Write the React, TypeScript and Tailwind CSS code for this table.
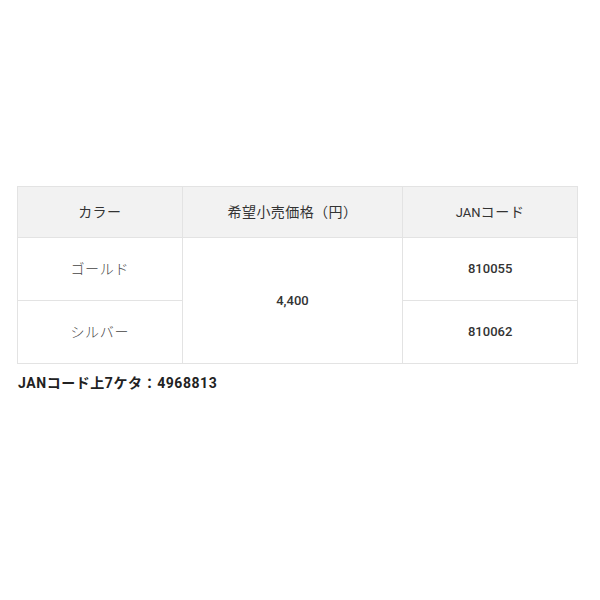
export default function App() {
  return (
    <div
      className="min-h-[600px] w-[600px] bg-white pt-[186px] text-[#333]"
      style={{ fontFamily: "Roboto, 'Noto Sans CJK JP', sans-serif" }}
    >
      <table className="ml-[17px] w-[561px] border-collapse border border-[#e3e3e3] text-[13px]">
        <colgroup>
          <col className="w-[165px]" />
          <col className="w-[221px]" />
          <col className="w-[175px]" />
        </colgroup>
        <thead>
          <tr className="h-[51px] bg-[#f2f2f2]">
            <th className="border border-[#e3e3e3] text-[14px] font-normal tracking-[0.03em]">カラー</th>
            <th className="border border-[#e3e3e3] text-[14px] font-normal tracking-[0.03em]">
              希望小売価格（円）
            </th>
            <th className="border border-[#e3e3e3] font-normal">
              JAN<span className="text-[14px] tracking-[0.05em]">コード</span>
            </th>
          </tr>
        </thead>
        <tbody>
          <tr className="h-[63px]">
            <td className="border border-[#e3e3e3] text-center text-[14px] font-light tracking-[0.05em] text-[#444]">
              ゴールド
            </td>
            <td rowSpan={2} className="border border-[#e3e3e3] text-center font-medium">
              4,400
            </td>
            <td className="border border-[#e3e3e3] text-center font-medium">810055</td>
          </tr>
          <tr className="h-[63px]">
            <td className="border border-[#e3e3e3] text-center text-[14px] font-light tracking-[0.05em] text-[#444]">
              シルバー
            </td>
            <td className="border border-[#e3e3e3] text-center font-medium">810062</td>
          </tr>
        </tbody>
      </table>
      <p className="ml-[18px] mt-[10px] text-[14px] font-bold leading-[18px] tracking-[0.04em] text-[#222]">
        JANコード上7ケタ：4968813
      </p>
    </div>
  );
}
